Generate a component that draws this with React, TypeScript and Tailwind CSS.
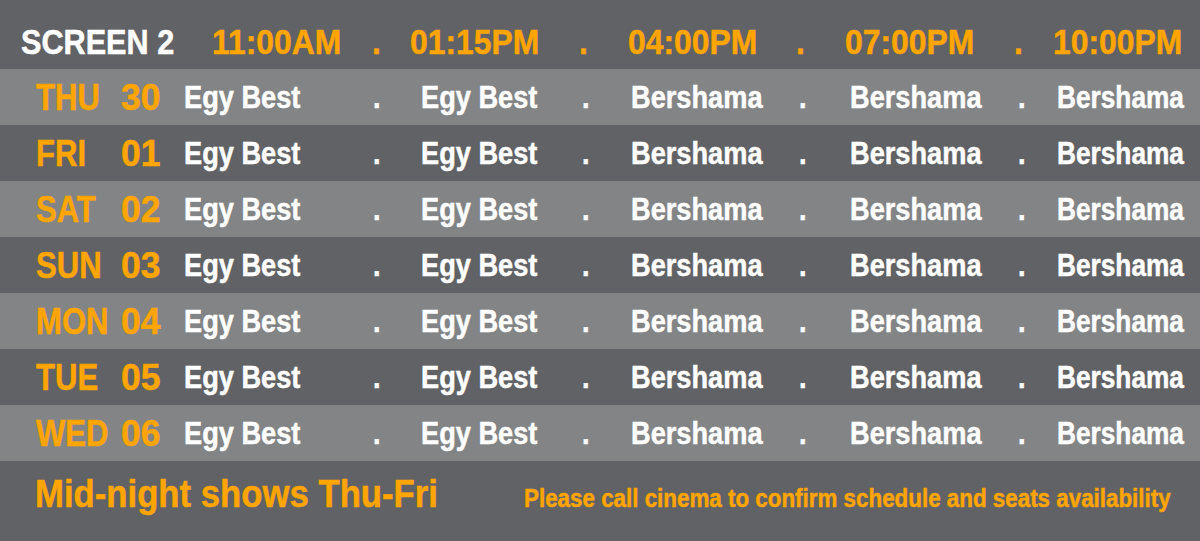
import React from "react";

const days = [
  ["THU", "30"],
  ["FRI", "01"],
  ["SAT", "02"],
  ["SUN", "03"],
  ["MON", "04"],
  ["TUE", "05"],
  ["WED", "06"],
];

function Film({ children, w }: { children: React.ReactNode; w: string }) {
  return (
    <div className={`${w} text-[32px] text-white`}>
      <span className="inline-block origin-left scale-x-[0.85]">{children}</span>
    </div>
  );
}

function Time({ children, w }: { children: React.ReactNode; w: string }) {
  return (
    <div className={w}>
      <span className="inline-block origin-left scale-x-[0.91]">{children}</span>
    </div>
  );
}

export default function App() {
  return (
    <div className="w-[1200px] h-[541px] bg-[#616265] font-['Liberation_Sans',Arial,sans-serif] font-bold [-webkit-text-stroke:0.5px] overflow-hidden">
      {/* header */}
      <div className="h-[69px] flex pl-[21px] pt-[24px] leading-none text-[35px] text-[#ffa500] whitespace-nowrap">
        <div className="w-[191px] text-white">
          <span className="inline-block origin-left scale-x-[0.875]">SCREEN 2</span>
        </div>
        <Time w="w-[160px]">11:00AM</Time>
        <Time w="w-[38px]">.</Time>
        <Time w="w-[169px]">01:15PM</Time>
        <Time w="w-[49px]">.</Time>
        <Time w="w-[168px]">04:00PM</Time>
        <Time w="w-[49px]">.</Time>
        <Time w="w-[169px]">07:00PM</Time>
        <Time w="w-[39px]">.</Time>
        <Time w="w-[140px]">10:00PM</Time>
      </div>
      {/* rows */}
      {days.map(([d, n], i) => (
        <div
          key={d}
          className={`h-[56px] flex items-center pl-[36px] whitespace-nowrap leading-none ${
            i % 2 === 0 ? "bg-[#838486]" : "bg-[#616265]"
          }`}
        >
          <div className="w-[85px] text-[37px] text-[#ffa500]">
            <span className="inline-block origin-left scale-x-[0.84]">{d}</span>
          </div>
          <div className="w-[63px] text-[37px] text-[#ffa500]">
            <span className="inline-block origin-left scale-x-[0.96]">{n}</span>
          </div>
          <Film w="w-[189px]">Egy Best</Film>
          <Film w="w-[48px]">.</Film>
          <Film w="w-[161px]">Egy Best</Film>
          <Film w="w-[49px]">.</Film>
          <Film w="w-[168px]">Bershama</Film>
          <Film w="w-[51px]">.</Film>
          <Film w="w-[168px]">Bershama</Film>
          <Film w="w-[39px]">.</Film>
          <div className="w-[140px] text-[32px] text-white">
            <span className="inline-block origin-left scale-x-[0.82]">Bershama</span>
          </div>
        </div>
      ))}
      {/* footer */}
      <div className="flex items-baseline pl-[35px] pt-[13px] leading-none whitespace-nowrap text-[#ffa500]">
        <div className="w-[489px] text-[39px]">
          <span className="inline-block origin-left scale-x-[0.89]">Mid-night shows Thu-Fri</span>
        </div>
        <div className="w-[650px] text-[25px]">
          <span className="inline-block origin-left scale-x-[0.895]">
            Please call cinema to confirm schedule and seats availability
          </span>
        </div>
      </div>
    </div>
  );
}
